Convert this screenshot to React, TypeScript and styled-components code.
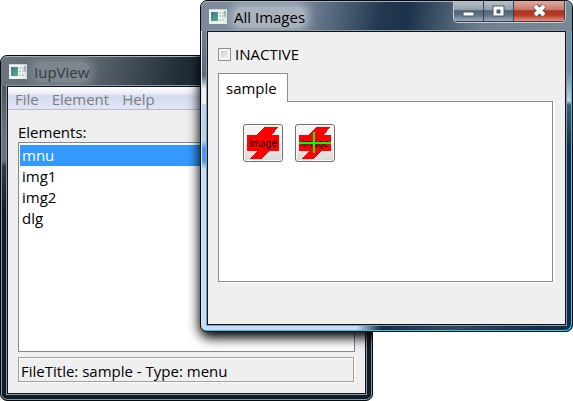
import React, { useState } from "react";
import styled, { createGlobalStyle } from "styled-components";

const Global = createGlobalStyle`
  * { box-sizing: border-box; }
  body { margin: 0; background: #fff; font: 15px/20px "Open Sans", "Noto Sans", sans-serif; color: #000; }
  button, input { font: inherit; }
`;

const Desktop = styled.main`
  position: relative;
  min-height: 100vh;
  overflow: hidden;
`;

const Window = styled.section`
  position: absolute;
  display: flex;
  flex-direction: column;
  overflow: hidden;
  border-radius: 7px;
  padding: 0 6px 6px;
  border: 1px solid #05080c;
`;

const BackWindow = styled(Window)`
  inset: 55px 200px 0 0;
  background: linear-gradient(#59626b 0, #4d565f 30px, #68737e 80px, #68737e 105px, #303a43 110px, #0f1b25 160px, #0f1b25 100%);
  box-shadow: inset 0 0 0 1px #8c969e;
  &::after {
    content: "";
    position: absolute;
    inset: -40px -40px 69px 202px;
    border-radius: 7px;
    box-shadow: 0 3px 12px 4px #000;
    pointer-events: none;
  }
`;

const FrontWindow = styled(Window)`
  inset: 0 0 69px 200px;
  background:
    linear-gradient(90deg, #c5dffa 0 155px, #12304e 180px, #34485c 250px, #12304e 340px) bottom / 100% 7px no-repeat,
    linear-gradient(#7e8c99 0, #7b8996 70px, #c3ced8 100px, #47586a 104px, #142b45 150px) right / 7px 100% no-repeat,
    linear-gradient(#7e8c99 0, #5c6b7b 75px, #eef3f8 88px, #eef3f8 102px, #bcd4ec 104px, #b6d0ec 140px, #3f98ee 148px, #4c9fee 160px, #c5dffa 168px) left / 7px 100% no-repeat,
    #7b8996;
  box-shadow: inset -1px -1px #27c8f8, inset 1px 0 #dbe8f4;
`;

const TitleBar = styled.header<{ $front?: boolean }>`
  display: flex;
  align-items: center;
  gap: 7px;
  height: 30px;
  flex: none;
  margin: 0 -6px;
  padding-left: 8px;
  border-top: 1px solid #a9b3bd;
  border-radius: 6px 6px 0 0;
  color: ${(p) => (p.$front ? "#000" : "#333a40")};
  background: ${(p) =>
    p.$front
      ? "linear-gradient(100deg, #7d8b99 0, #78889a 100px, #22384f 180px, #1b324c 205px, #6f7f8e 280px, #7b8996 100%)"
      : "linear-gradient(100deg, #6a747d 0, #5c666f 90px, #202c37 180px, #202c37 100%)"};
`;

const Title = styled.h1<{ $front?: boolean }>`
  margin: 0;
  font-size: 15px;
  line-height: 20px;
  font-weight: 400;
  border-radius: 8px;
  background: ${(p) => (p.$front ? "#a9b3bd" : "#7d868e")};
  box-shadow: 0 0 10px 4px ${(p) => (p.$front ? "#a9b3bd" : "#7d868e")};
`;

const Client = styled.div<{ $front?: boolean }>`
  flex: 1;
  display: flex;
  flex-direction: column;
  min-height: 0;
  background: #efefef;
  border: 1px solid #0b151e;
  outline: 1px solid #8d99a5;
  padding: ${(p) => (p.$front ? "12px 12px 42px 10px" : "0")};
`;

const AppIcon = () => (
  <svg width="18" height="15" viewBox="0 0 18 15" aria-hidden="true">
    <defs>
      <linearGradient id="picture" x2="1" y2="1">
        <stop stopColor="#4570a5" />
        <stop offset="1" stopColor="#4fb86a" />
      </linearGradient>
    </defs>
    <rect width="18" height="15" fill="#eef0f1" />
    <rect width="18" height="1" fill="#d0d6da" />
    <rect x="2" y="3" width="7" height="9" fill="url(#picture)" />
    <path d="M10 4h2M13 4h2M10 7h2M13 7h2M10 11h2M13 11h2" stroke="#cdd0d2" strokeWidth="2" />
    <path d="M16 2v3" stroke="#3976b5" strokeWidth="1" />
    <path d="M16 5v3" stroke="#55aa65" strokeWidth="1" />
  </svg>
);

const Controls = styled.div`
  display: flex;
  align-self: flex-start;
  margin: -1px 6px 0 auto;
  border: 1px solid #c4ccd4;
  border-top: 0;
  border-radius: 0 0 5px 5px;
  overflow: hidden;
`;

const Control = styled.button<{ $close?: boolean }>`
  display: grid;
  place-items: center;
  width: ${(p) => (p.$close ? 51 : 30)}px;
  height: 21px;
  padding: 0;
  border: solid #34424f;
  border-width: 0 1px 1px 0;
  background: ${(p) =>
    p.$close
      ? "linear-gradient(#dfaaa1, #c87769 45%, #b03421 48%, #b73924 70%, #e5917d)"
      : "linear-gradient(#b9c2ca, #929eaa 45%, #526375 48%, #607184 70%, #9dabb8)"};
`;

const MenuBar = styled.nav`
  display: flex;
  gap: 13px;
  height: 23px;
  flex: none;
  padding: 2px 7px 0;
  border-bottom: 1px solid #b6bcd2;
  background: linear-gradient(#fff 0, #e8ecf6 7px, #d4dbed 9px, #e1e6f6 100%);
`;

const MenuItem = styled.button`
  padding: 0;
  border: 0;
  background: none;
  color: #7e7e82;
  line-height: 20px;
`;

const ViewBody = styled.div`
  flex: 1;
  display: flex;
  flex-direction: column;
  min-height: 0;
  padding: 12px 10px 11px;
`;

const Label = styled.span`
  line-height: 20px;
`;

const List = styled.ul`
  flex: 1;
  min-height: 0;
  list-style: none;
  margin: 0 0 5px;
  padding: 2px 1px;
  background: #fff;
  border: 1px solid #828790;
`;

const Item = styled.li`
  line-height: 21px;
`;

const ItemButton = styled.button<{ $selected: boolean }>`
  display: block;
  width: 100%;
  height: 21px;
  padding: 0 2px;
  border: 0;
  text-align: left;
  line-height: 21px;
  color: ${(p) => (p.$selected ? "#fff" : "#000")};
  background: ${(p) => (p.$selected ? "#3399ff" : "#fff")};
`;

const Status = styled.output`
  display: block;
  height: 25px;
  flex: none;
  margin-right: 1px;
  padding: 3px 2px;
  line-height: 20px;
  border: 1px solid #a0a0a0;
  box-shadow: 1px 1px #fff, inset 1px 1px #fff;
`;

const CheckLabel = styled.label`
  display: flex;
  align-items: center;
  gap: 4px;
  height: 20px;
`;

const Check = styled.input`
  appearance: none;
  width: 13px;
  height: 13px;
  margin: 0;
  border: 1px solid #8e8f8f;
  background: linear-gradient(135deg, #c5cbd0, #f6f6f6) content-box, #f4f4f4;
  padding: 2px;
  &:checked { background: #3399ff content-box; }
`;

const Tab = styled.button`
  align-self: flex-start;
  position: relative;
  z-index: 1;
  height: 29px;
  margin: 9px 0 -1px;
  padding: 0 10px 0 7px;
  background: #fff;
  border: 1px solid #898c95;
  border-bottom: 0;
`;

const TabPanel = styled.div`
  flex: 1;
  display: flex;
  align-items: flex-start;
  gap: 12px;
  padding: 22px 24px;
  background: #fff;
  border: 1px solid #898c95;
  box-shadow: 2px 1px #fff;
`;

const ImageButton = styled.button`
  display: grid;
  place-items: center;
  width: 40px;
  height: 38px;
  padding: 0;
  border: 1px solid #707070;
  border-radius: 3px;
  background: linear-gradient(#f4f4f4 0 48%, #ececec 52%, #dadada);
  box-shadow: inset 0 0 0 1px #fcfcfc;
`;

const ImageGlyph = ({ crossed = false }: { crossed?: boolean }) => (
  <svg width="32" height="32" viewBox="0 0 32 32" role="img" aria-label={crossed ? "Image with cross" : "Image"}>
    <path d="M17 0H31L25 8H32V24H22L15 32H3L10 24H0V8H10Z" fill="#f00" shapeRendering="crispEdges" />
    <text x="16" y="20" textAnchor="middle" fontFamily="DejaVu Sans Condensed, Liberation Sans" fontSize="10">Image</text>
    {crossed && <path d="M0 16H32M15 5V26" stroke="#0f0" strokeWidth="2" />}
  </svg>
);

export default function App() {
  const [selected, setSelected] = useState("mnu");
  return (
    <Desktop>
      <Global />
      <BackWindow aria-label="IupView">
        <TitleBar><AppIcon /><Title>IupView</Title></TitleBar>
        <Client>
          <MenuBar>
            <MenuItem>File</MenuItem><MenuItem>Element</MenuItem><MenuItem>Help</MenuItem>
          </MenuBar>
          <ViewBody>
            <Label id="elements">Elements:</Label>
            <List aria-labelledby="elements">
              {["mnu", "img1", "img2", "dlg"].map((n) => (
                <Item key={n}><ItemButton $selected={n === selected} onClick={() => setSelected(n)}>{n}</ItemButton></Item>
              ))}
            </List>
            <Status>FileTitle: sample - Type: menu</Status>
          </ViewBody>
        </Client>
      </BackWindow>
      <FrontWindow aria-label="All Images">
        <TitleBar $front>
          <AppIcon /><Title $front>All Images</Title>
          <Controls>
            <Control aria-label="Minimize">
              <svg width="13" height="14"><rect x="1" y="8" width="11" height="4" fill="#fff" stroke="#4c5966" /></svg>
            </Control>
            <Control aria-label="Maximize">
              <svg width="13" height="14"><path d="M1 2H12V12H1ZM5 6V9H8V6Z" fill="#fff" fillRule="evenodd" stroke="#4c5966" /></svg>
            </Control>
            <Control $close aria-label="Close">
              <svg width="15" height="14">
                <path d="M3 2L12 11M12 2L3 11" stroke="#5b4b55" strokeWidth="6" />
                <path d="M3 2L12 11M12 2L3 11" stroke="#fff" strokeWidth="4" />
              </svg>
            </Control>
          </Controls>
        </TitleBar>
        <Client $front>
          <CheckLabel><Check type="checkbox" />INACTIVE</CheckLabel>
          <Tab role="tab" aria-selected="true">sample</Tab>
          <TabPanel role="tabpanel">
            <ImageButton aria-label="Image"><ImageGlyph /></ImageButton>
            <ImageButton aria-label="Image with cross"><ImageGlyph crossed /></ImageButton>
          </TabPanel>
        </Client>
      </FrontWindow>
    </Desktop>
  );
}
